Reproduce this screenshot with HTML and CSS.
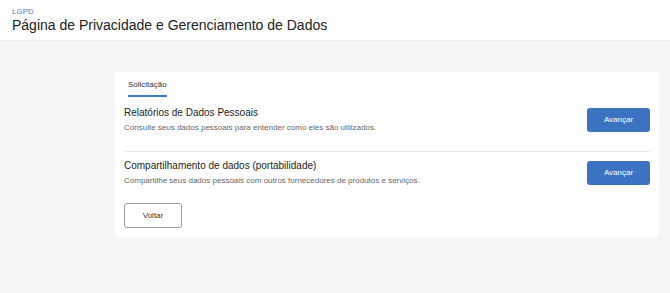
FILE: index.html
```html
<!DOCTYPE html>
<html lang="pt-BR">
<head>
    <meta charset="UTF-8">
    <meta name="viewport" content="width=device-width, initial-scale=1.0">
    <title>LGPD</title>
    <link rel="stylesheet" href="styles.css">
</head>
<body>
    <div class="header">
        <div class="header_crumb">LGPD</div>
        <h1 class="header_title">Página de Privacidade e Gerenciamento de Dados</h1>
    </div>

    <div class="main">
        <div class="card">
            <div class="tabs">
                <span class="tab on">Solicitação</span>
            </div>

            <div class="option">
                <div class="option_text">
                    <div class="option_title">Relatórios de Dados Pessoais</div>
                    <div class="option_desc">Consulte seus dados pessoais para entender como eles são utilizados.</div>
                </div>
                <a href="javascript: void(0)" class="btn btn_primary">Avançar</a>
            </div>

            <div class="option option_last">
                <div class="option_text">
                    <div class="option_title">Compartilhamento de dados (portabilidade)</div>
                    <div class="option_desc">Compartilhe seus dados pessoais com outros fornecedores de produtos e serviços.</div>
                </div>
                <a href="javascript: void(0)" class="btn btn_primary">Avançar</a>
            </div>

            <a href="javascript: void(0)" class="btn btn_back">Voltar</a>
        </div>
    </div>
</body>
</html>
```

FILE: styles.css
```css
* {
    box-sizing: border-box;
}
body {
    margin: 0;
    min-height: 293px;
    font-family: "Liberation Sans", Arial, sans-serif;
    background-color: #f6f6f6;
    color: #222;
}
.header {
    height: 41px;
    padding: 7px 12px 0;
    background-color: #fff;
    border-bottom: 1px solid #efefef;
}
.header_crumb {
    font-size: 8px;
    line-height: 10px;
    color: #4a7fc8;
}
.header_title {
    margin: 0;
    font-size: 14px;
    font-weight: normal;
    line-height: 16px;
    color: #222;
}
.main {
    padding: 31px 11px 0 115px;
}
.card {
    background-color: #fff;
    border-radius: 3px;
    padding: 8px 9px 9px;
}
.tabs {
    display: flex;
    padding-left: 4px;
}
.tab {
    padding-bottom: 5px;
    font-size: 8px;
    line-height: 10px;
    color: #333;
    border-bottom: 2px solid transparent;
}
.tab.on {
    border-bottom-color: #3f78c6;
}
.option {
    display: flex;
    align-items: center;
    justify-content: space-between;
    padding: 9px 0 17px;
    border-bottom: 1px solid #ececec;
}
.option_last {
    padding: 7px 0 16px;
    border-bottom: none;
}
.option_title {
    font-size: 10px;
    line-height: 13px;
    color: #222;
    margin-bottom: 3px;
}
.option_desc {
    font-size: 8px;
    line-height: 12px;
    color: #666;
}
.btn {
    display: inline-block;
    font-size: 8px;
    text-align: center;
    text-decoration: none;
    border-radius: 3px;
}
.btn_primary {
    width: 63px;
    height: 24px;
    line-height: 24px;
    color: #fff;
    background-color: #3b73c2;
}
.btn_back {
    width: 58px;
    height: 25px;
    line-height: 23px;
    color: #333;
    border: 1px solid #999;
}
```
